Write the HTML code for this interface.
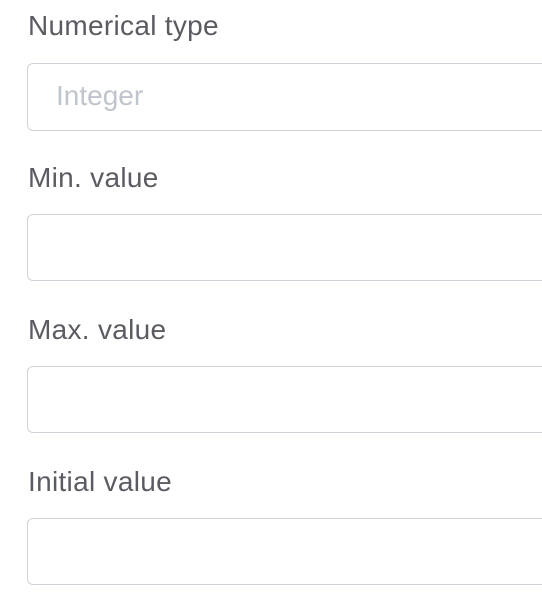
<!DOCTYPE html>
<html><head><meta charset="utf-8"><style>
html,body{margin:0;padding:0;background:#fff;width:542px;height:598px;overflow:hidden}
body{position:relative;font-family:"Liberation Sans",Arial,sans-serif}
.l{position:absolute;left:28px;font-size:28px;letter-spacing:0.3px;color:#5a5c61;line-height:32px;white-space:nowrap}
.b{position:absolute;left:27px;width:540px;height:66px;border:1px solid #cfd2d8;border-radius:6px;box-sizing:border-box}
.p{position:absolute;left:28px;top:15px;font-size:28px;color:#c0c4cc;line-height:34px}
</style></head><body>
<div class="l" style="top:10px">Numerical type</div>
<div class="b" style="top:63px;height:68px"><span class="p">Integer</span></div>
<div class="l" style="top:162px">Min. value</div>
<div class="b" style="top:214px;height:67px"></div>
<div class="l" style="top:314px">Max. value</div>
<div class="b" style="top:366px;height:67px"></div>
<div class="l" style="top:466px">Initial value</div>
<div class="b" style="top:518px;height:67px"></div>
</body></html>
